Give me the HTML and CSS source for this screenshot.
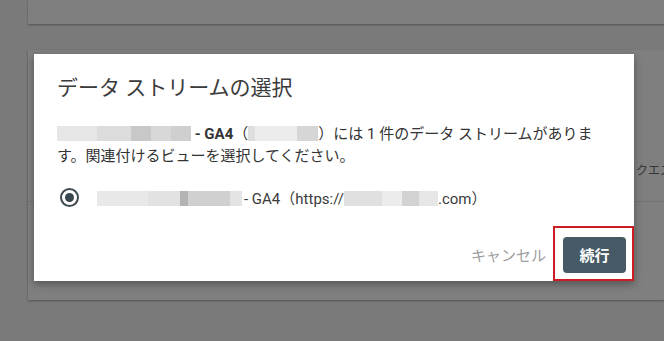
FILE: index.html
```html
<!DOCTYPE html>
<html>
<head>
  <meta charset="UTF-8">
  <title>データ ストリームの選択</title>
  <link rel="stylesheet" href="styles.css">
</head>
<body>
  <div class="page">
    <div class="bg-card top-card"></div>
    <div class="bg-card main-card">
      <div class="bg-row"><span class="bg-label">クエス</span></div>
      <div class="bg-rule"></div>
    </div>
  </div>

  <div class="overlay">
    <div class="dialog">
      <h2 class="dialog-title">データ ストリームの選択</h2>
      <p class="dialog-text">
        <span class="blur blur-name"></span> <b>- GA4</b>（<span class="blur blur-id"></span>）には 1 件のデータ ストリームがありま<br>す。関連付けるビューを選択してください。
      </p>
      <label class="radio-row">
        <span class="radio"><span class="radio-dot"></span></span>
        <span class="radio-text"><span class="blur blur-stream"></span>- GA4（https://<span class="blur blur-url"></span>.com）</span>
      </label>
      <div class="actions">
        <button class="btn-text">キャンセル</button>
        <button class="btn-primary">続行</button>
      </div>
    </div>
    <div class="highlight"></div>
  </div>
</body>
</html>
```

FILE: styles.css
```css
* {
  margin: 0;
  padding: 0;
  box-sizing: border-box;
}

body {
  width: 664px;
  height: 341px;
  overflow: hidden;
  position: relative;
  background: #7a7a7b;
  font-family: Roboto, "Noto Sans CJK JP", sans-serif;
  color: #333;
}

/* dimmed page behind the dialog */
.page {
  padding-left: 28px;
}

.bg-card {
  background: #7f7f80;
  box-shadow: 0 1px 2px rgba(0,0,0,0.35);
}

.top-card {
  height: 24px;
}

.main-card {
  margin-top: 26px;
  height: 250px;
  padding-top: 110px;
}

.bg-row {
  padding-left: 608px;
  white-space: nowrap;
  overflow: hidden;
}

.bg-label {
  font-size: 12px;
  color: #353535;
}

.bg-rule {
  margin-top: 22px;
  height: 1px;
  background: #747475;
}

/* dialog */
.overlay {
  position: absolute;
  top: 0;
  left: 0;
  right: 0;
  bottom: 0;
}

.dialog {
  position: absolute;
  left: 34px;
  top: 54px;
  width: 600px;
  height: 227px;
  background: #fff;
  box-shadow: 0 3px 8px rgba(0,0,0,0.35);
  padding: 20px 8px 8px 23px;
  display: flex;
  flex-direction: column;
}

.dialog-title {
  font-size: 21px;
  font-weight: 400;
  line-height: 28px;
  color: #3b3b3b;
}

.dialog-text {
  margin-top: 21px;
  font-size: 15px;
  line-height: 22px;
  color: #333;
}

.dialog-text b {
  font-weight: 700;
}

.blur {
  display: inline-block;
  height: 15px;
  vertical-align: -2px;
}

.blur-name {
  width: 134px;
  background: linear-gradient(90deg, #e6e6e6 0 30%, #dcdcdc 30% 55%, #c8c8c8 55% 70%, #d8d8d8 70% 85%, #cfcfcf 85%);
}

.blur-id {
  width: 70px;
  background: linear-gradient(90deg, #dedede 0 10%, #ececec 10% 70%, #d6d6d6 70%);
}

.blur-stream {
  width: 145px;
  margin-right: 2px;
  background: linear-gradient(90deg, #e8e8e8 0 35%, #e2e2e2 35% 57%, #b4b4b4 57% 63%, #d0d0d0 63% 92%, #e4e4e4 92%);
}

.blur-url {
  width: 94px;
  background: linear-gradient(90deg, #e0e0e0 0 40%, #ececec 40% 62%, #d2d2d2 62% 80%, #e6e6e6 80%);
}

.radio-row {
  margin-top: 18px;
  display: flex;
  align-items: center;
  height: 24px;
  padding-left: 3px;
}

.radio {
  width: 19px;
  height: 19px;
  border: 2.5px solid #3f4a50;
  border-radius: 50%;
  display: flex;
  align-items: center;
  justify-content: center;
}

.radio-dot {
  width: 9px;
  height: 9px;
  border-radius: 50%;
  background: #37474f;
}

.radio-text {
  margin-left: 18px;
  font-size: 15px;
  color: #3b3b3b;
}

.actions {
  margin-top: auto;
  display: flex;
  justify-content: flex-end;
  align-items: center;
  gap: 9px;
}

.btn-text {
  border: none;
  background: none;
  font-family: inherit;
  font-size: 15px;
  color: #9e9e9e;
  padding: 8px;
}

.btn-primary {
  width: 63px;
  height: 36px;
  border: none;
  border-radius: 4px;
  background: #455a64;
  color: #fff;
  font-family: inherit;
  font-size: 15px;
  font-weight: 700;
}

/* annotation box */
.highlight {
  position: absolute;
  left: 553px;
  top: 226px;
  width: 81px;
  height: 55px;
  border: 2.5px solid #cc1c24;
}
```
